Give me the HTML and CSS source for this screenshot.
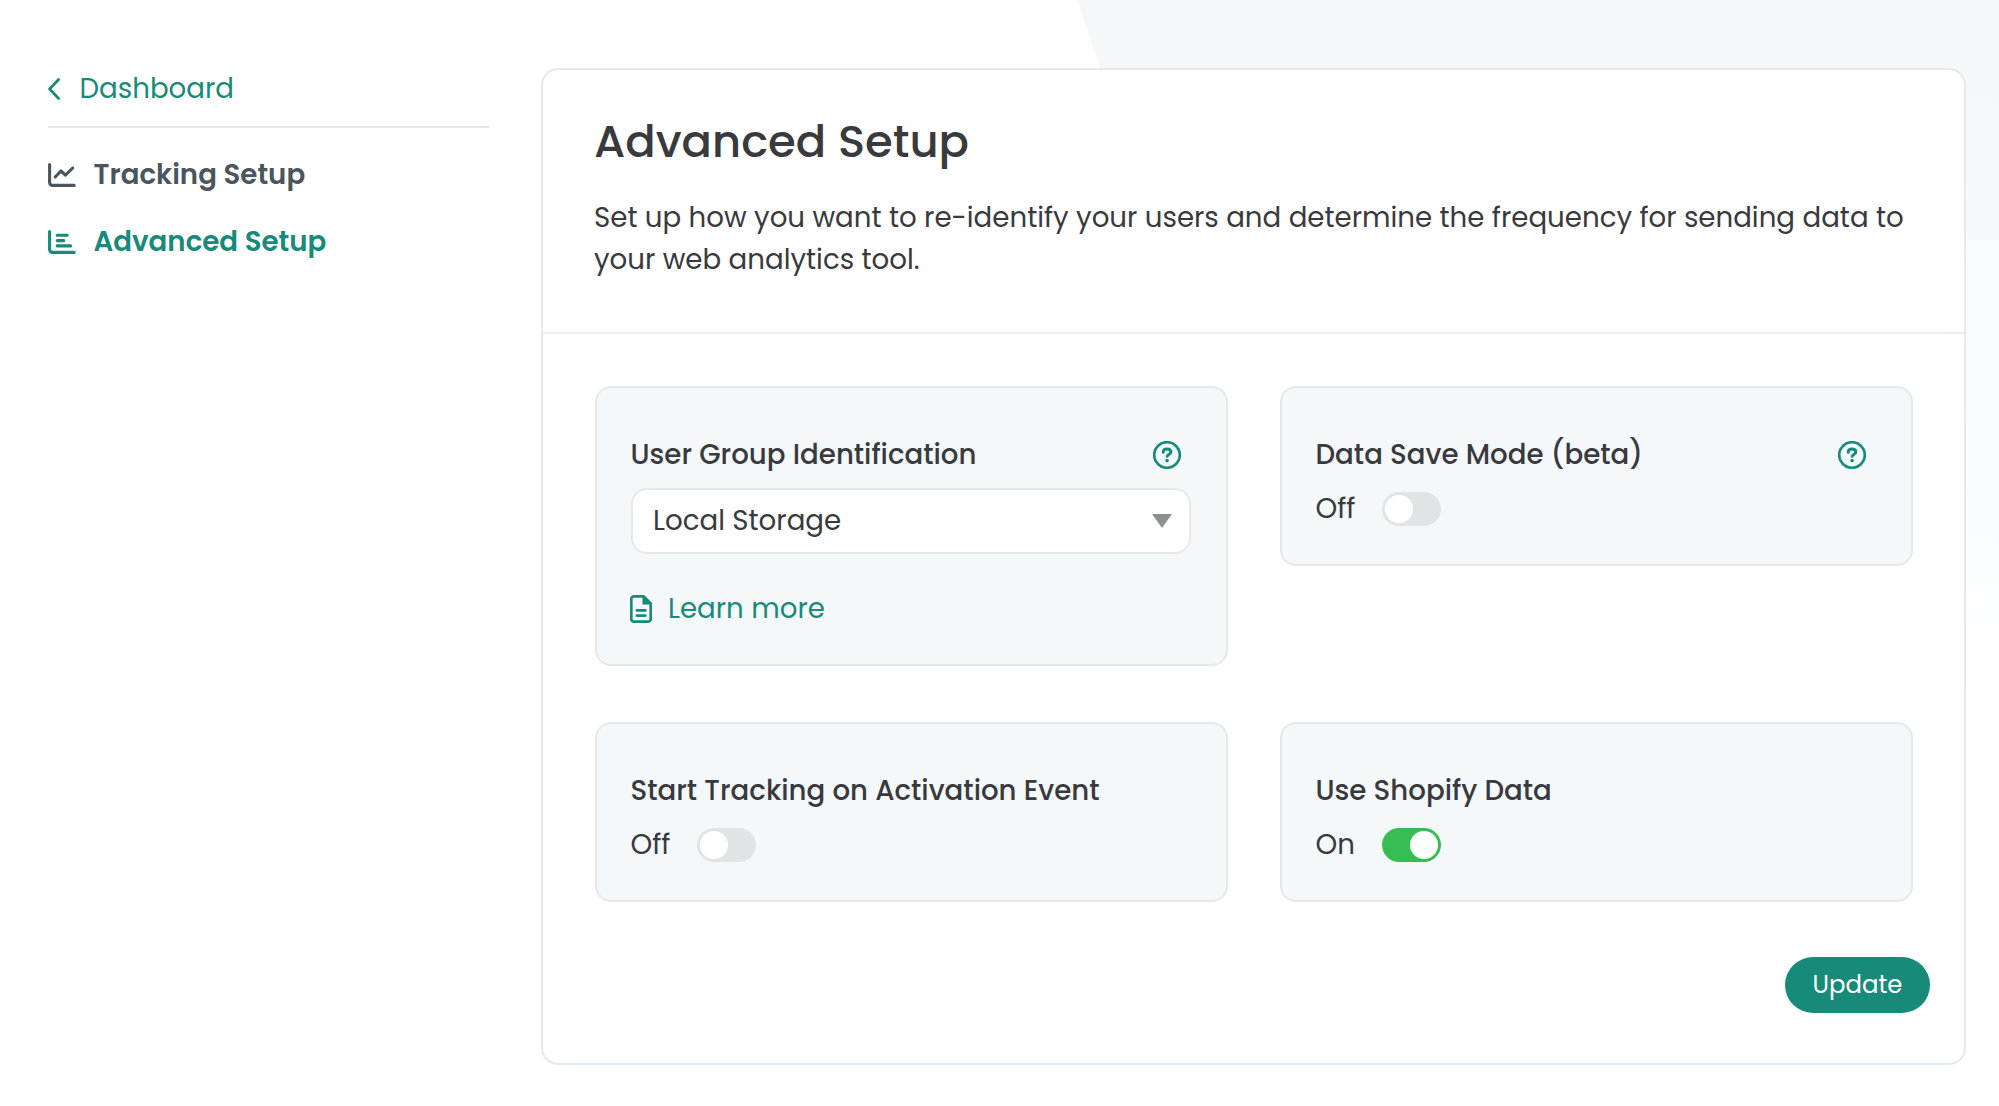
FILE: index.html
```html
<!DOCTYPE html>
<html lang="en">
<head>
<meta charset="utf-8">
<title>Advanced Setup</title>
<link rel="stylesheet" href="styles.css">
</head>
<body>
<div class="page">
  <aside class="sidebar">
    <a class="back">
      <svg class="back-icon" viewBox="0 0 12 22"><path d="M10.6 1.5 1.6 11l9 9.5"/></svg>
      <span>Dashboard</span>
    </a>
    <nav class="nav">
      <a class="nav-item">
        <svg class="nav-icon" viewBox="0 0 28 24"><path d="M1.6 1.6v18a2.800 2.800 0 0 0 2.800 2.800h21.800"/><path d="m7.200 14 5.700-6 4.500 4.200 7.300-7.200"/></svg>
        <span>Tracking Setup</span>
      </a>
      <a class="nav-item active">
        <svg class="nav-icon" viewBox="0 0 28 24"><path d="M1.600 1.600v18a2.800 2.800 0 0 0 2.800 2.800h21.800M9.200 5.300h10M9.200 10.600h6.600M9.200 15.900h13.400"/></svg>
        <span>Advanced Setup</span>
      </a>
    </nav>
  </aside>

  <main class="panel">
    <header class="panel-head">
      <h1>Advanced Setup</h1>
      <p>Set up how you want to re-identify your users and determine the frequency for sending data to your web analytics tool.</p>
    </header>
    <div class="cards">
      <section class="card card-tall">
        <div class="card-title">
          <h2>User Group Identification</h2>
          <svg class="help" viewBox="0 0 28 28"><circle cx="14" cy="14" r="12.800"/><path class="mark" d="M10.200 11.200c0-2.200 1.500-3.300 3.800-3.300s3.900 1.100 3.900 3.100c0 2.500-3.700 2.400-3.700 4.300"/><circle class="dot" cx="14.100" cy="19.600" r="1.800"/></svg>
        </div>
        <div class="select">
          <span>Local Storage</span>
          <svg class="caret" viewBox="0 0 20 14"><path d="M0 0h20L10 14z"/></svg>
        </div>
        <a class="learn">
          <svg class="doc" viewBox="0 0 22 28"><path d="M13.500 1.300H4A2.700 2.700 0 0 0 1.300 4v20A2.700 2.700 0 0 0 4 26.700h14a2.700 2.700 0 0 0 2.700-2.700V8.500zM6.800 15.300h8.600M6.800 20.600h8.600"/><path class="fold" d="M12.500 1v8.500h8.500z"/></svg>
          <span>Learn more</span>
        </a>
      </section>
      <section class="card">
        <div class="card-title">
          <h2>Data Save Mode (beta)</h2>
          <svg class="help" viewBox="0 0 28 28"><circle cx="14" cy="14" r="12.800"/><path class="mark" d="M10.200 11.200c0-2.200 1.500-3.300 3.800-3.300s3.900 1.100 3.900 3.100c0 2.500-3.700 2.400-3.700 4.300"/><circle class="dot" cx="14.100" cy="19.600" r="1.800"/></svg>
        </div>
        <div class="toggle-row"><span class="state">Off</span><span class="toggle"></span></div>
      </section>
      <section class="card">
        <div class="card-title"><h2>Start Tracking on Activation Event</h2></div>
        <div class="toggle-row"><span class="state">Off</span><span class="toggle"></span></div>
      </section>
      <section class="card">
        <div class="card-title"><h2>Use Shopify Data</h2></div>
        <div class="toggle-row"><span class="state">On</span><span class="toggle on"></span></div>
      </section>
    </div>
    <footer class="actions"><button class="update">Update</button></footer>
  </main>
</div>
</body>
</html>
```
FILE: styles.css
```css
* { box-sizing: border-box; }
body {
  margin: 0;
  background: #fff;
  color: #393a3e;
  font: 400 27.67px/42px Poppins, Inter, sans-serif;
}
h1, h2, p { margin: 0; }
svg { display: block; flex: none; fill: none; stroke: currentColor; stroke-width: 2.7; stroke-linecap: round; stroke-linejoin: round; }

.page {
  display: grid;
  grid-template-columns: 441px 1425px;
  column-gap: 52px;
  align-items: start;
  height: 1106px;
  padding: 68px 0 0 48px;
  overflow: hidden;
  background: linear-gradient(#f4f8fa, #fafbfd 400px, #fff 720px);
  position: relative;
  z-index: 0;
}
/* white area left of the slanted tint */
.page::before {
  content: "";
  position: absolute;
  z-index: -1;
  inset: 0;
  background: #fff;
  clip-path: polygon(0 0, 1077px 0, 1457px 1106px, 0 1106px);
}

.back {
  display: flex;
  align-items: center;
  gap: 19.5px;
  height: 60px;
  padding-bottom: 17px;
  border-bottom: 2px solid #e2e8ec;
  color: #178a7a;
}
.back-icon { width: 12px; height: 22px; }
.nav { padding-top: 26px; }
.nav-item { display: flex; align-items: center; gap: 17.5px; height: 42px; margin-bottom: 25px; color: #4b555d; font-weight: 600; }
.nav-item.active { color: #178a7a; }
.nav-icon { width: 28px; height: 24px; stroke-width: 3.1; }

.panel {
  height: 997px;
  background: #fff;
  border: 2px solid #e4e9ed;
  border-radius: 17px;
}
.panel-head {
  height: 264px;
  padding: 42px 51px 0;
  border-bottom: 2px solid #eceff1;
}
h1 { font-size: 44.9px; font-weight: 500; line-height: 60px; }
.panel-head p { margin-top: 25px; line-height: 41.5px; }

.cards {
  display: grid;
  grid-template-columns: 633px 633px;
  column-gap: 52px;
  row-gap: 56px;
  align-items: start;
  padding: 52px 0 0 51.500px;
}
.card {
  height: 180px;
  padding: 46px 35px 0 34px;
  background: #f4f8fb;
  border: 2px solid #e4e9ec;
  border-radius: 16px;
}
.card-tall { height: 280px; }
.card-title { display: flex; align-items: center; justify-content: space-between; height: 42px; padding-right: 10px; }
h2 { font-size: 27.67px; font-weight: 500; white-space: nowrap; }
.help { width: 28px; height: 28px; color: #178a7a; }
.help .mark { stroke-width: 3; }
.help .dot { fill: currentColor; stroke: none; }
.select {
  display: flex;
  align-items: center;
  justify-content: space-between;
  height: 66px;
  margin-top: 12px;
  padding: 0 17px 0 20.500px;
  background: #fff;
  border: 2px solid #e4e9ec;
  border-radius: 16px;
}
.caret { width: 20px; height: 14px; fill: #8e8f91; stroke: none; }
.learn { display: flex; align-items: center; gap: 16.500px; height: 42px; margin: 34px 0 0 -1px; color: #178a7a; }
.doc { width: 22px; height: 28px; }
.doc .fold { fill: currentColor; stroke: none; }

.toggle-row { display: flex; align-items: center; height: 34px; margin-top: 16px; }
.state { width: 66px; }
.toggle { display: flex; width: 59px; height: 34px; padding: 3px; border-radius: 17px; background: #e0e4e7; }
.toggle::before { content: ""; width: 28px; height: 28px; border-radius: 50%; background: #fff; }
.toggle.on { justify-content: flex-end; background: #38bd55; }

.actions { display: flex; justify-content: flex-end; padding: 55px 34px 0 0; }
.update {
  width: 145px;
  height: 56px;
  padding: 0;
  border: 0;
  border-radius: 28px;
  background: #178a7a;
  color: #fff;
  font: 400 24.4px/56px Poppins, Inter, sans-serif;
}
```
